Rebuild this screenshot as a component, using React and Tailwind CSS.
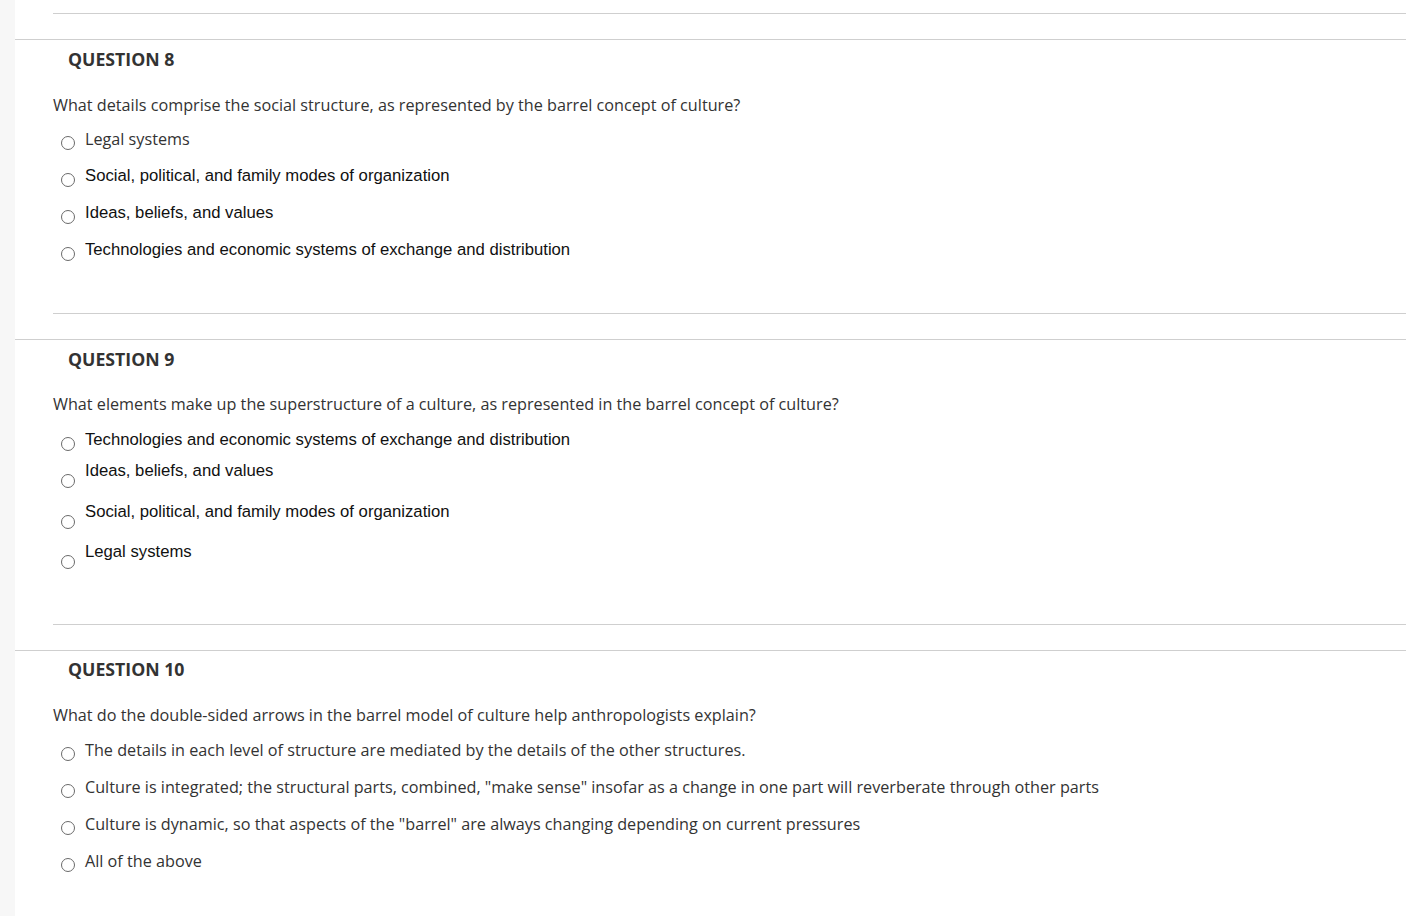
import React from "react";

const OS = { fontFamily: '"Open Sans", "Liberation Sans", sans-serif' };
const AR = { fontFamily: '"Liberation Sans", Arial, sans-serif' };

function Radio({ mt }) {
  return (
    <span
      className={`block shrink-0 w-[14px] h-[14px] rounded-full border border-[#6a6a6a] bg-white ml-[8px] ${mt}`}
    />
  );
}

function Option({ text, arial, rowMt, radioMt }) {
  return (
    <div className={`flex items-start ${rowMt}`}>
      <Radio mt={radioMt} />
      <span
        className={`ml-[10px] leading-[24px] whitespace-nowrap ${arial ? "text-[16.7px] text-[#111]" : "text-[16.2px] text-[#333]"}`}
        style={arial ? AR : OS}
      >
        {text}
      </span>
    </div>
  );
}

function Question({ num, text, options, headPt, textMt, mb }) {
  return (
    <div className="border-t border-[#cfcfcf]">
      <div className={`pl-[38px] ${headPt}`}>
        <div
          className="ml-[15px] text-[17.7px] leading-[22px] font-bold text-[#333]"
          style={OS}
        >
          QUESTION {num}
        </div>
        <div
          className={`${textMt} text-[16.2px] leading-[24px] text-[#333]`}
          style={OS}
        >
          {text}
        </div>
        <div className={`flex flex-col ${mb}`}>
          {options.map((o, i) => (
            <Option key={i} {...o} />
          ))}
        </div>
      </div>
      <div className="ml-[38px] border-t border-[#cfcfcf]" />
      <div className="h-[25px]" />
    </div>
  );
}

export default function App() {
  const q8 = [
    { text: "Legal systems", arial: false, rowMt: "mt-[10px]", radioMt: "mt-[9px]" },
    { text: "Social, political, and family modes of organization", arial: true, rowMt: "mt-[13px]", radioMt: "mt-[9px]" },
    { text: "Ideas, beliefs, and values", arial: true, rowMt: "mt-[13px]", radioMt: "mt-[9px]" },
    { text: "Technologies and economic systems of exchange and distribution", arial: true, rowMt: "mt-[13px]", radioMt: "mt-[9px]" },
  ];
  const q9 = [
    { text: "Technologies and economic systems of exchange and distribution", arial: true, rowMt: "mt-[12px]", radioMt: "mt-[9px]" },
    { text: "Ideas, beliefs, and values", arial: true, rowMt: "mt-[7px]", radioMt: "mt-[15px]" },
    { text: "Social, political, and family modes of organization", arial: true, rowMt: "mt-[12px]", radioMt: "mt-[15px]" },
    { text: "Legal systems", arial: true, rowMt: "mt-[11px]", radioMt: "mt-[15px]" },
  ];
  const q10 = [
    { text: "The details in each level of structure are mediated by the details of the other structures.", rowMt: "mt-[11px]", radioMt: "mt-[9px]" },
    { text: 'Culture is integrated; the structural parts, combined, "make sense" insofar as a change in one part will reverberate through other parts', rowMt: "mt-[13px]", radioMt: "mt-[9px]" },
    { text: 'Culture is dynamic, so that aspects of the "barrel" are always changing depending on current pressures', rowMt: "mt-[13px]", radioMt: "mt-[9px]" },
    { text: "All of the above", rowMt: "mt-[13px]", radioMt: "mt-[9px]" },
  ];

  return (
    <div className="flex min-h-screen h-[916px] overflow-hidden bg-white">
      <div className="w-[15px] shrink-0 bg-[#f7f7f7]" />
      <div className="flex-1 bg-white">
        <div className="h-[13px]" />
        <div className="ml-[38px] border-t border-[#cfcfcf]" />
        <div className="h-[25px]" />
        <Question
          num={8}
          text="What details comprise the social structure, as represented by the barrel concept of culture?"
          options={q8}
          headPt="pt-[8px]"
          textMt="mt-[23px]"
          mb="mb-[51px]"
        />
        <Question
          num={9}
          text="What elements make up the superstructure of a culture, as represented in the barrel concept of culture?"
          options={q9}
          headPt="pt-[8px]"
          textMt="mt-[22px]"
          mb="mb-[55px]"
        />
        <Question
          num={10}
          text="What do the double-sided arrows in the barrel model of culture help anthropologists explain?"
          options={q10}
          headPt="pt-[7px]"
          textMt="mt-[23px]"
          mb="mb-[51px]"
        />
      </div>
    </div>
  );
}
